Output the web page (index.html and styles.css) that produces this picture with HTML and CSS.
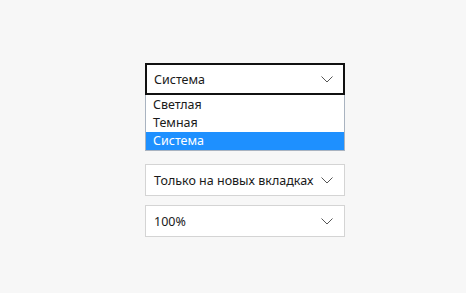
FILE: index.html
```html
<!DOCTYPE html>
<html lang="ru">
<head>
  <meta charset="UTF-8" />
  <title>Настройки</title>
  <link rel="stylesheet" href="styles.css">
</head>
<body>
  <div class="settings">
    <div class="select open">
      <span class="value">Система</span>
      <svg class="chevron" width="12" height="7" viewBox="0 0 12 7"><path d="M0.5 0.5 L6 6 L11.5 0.5" fill="none" stroke="#555" stroke-width="1"/></svg>
    </div>
    <ul class="options">
      <li>Светлая</li>
      <li>Темная</li>
      <li class="active">Система</li>
    </ul>

    <div class="select second">
      <span class="value">Только на новых вкладках</span>
      <svg class="chevron" width="12" height="7" viewBox="0 0 12 7"><path d="M0.5 0.5 L6 6 L11.5 0.5" fill="none" stroke="#555" stroke-width="1"/></svg>
    </div>

    <div class="select third">
      <span class="value">100%</span>
      <svg class="chevron" width="12" height="7" viewBox="0 0 12 7"><path d="M0.5 0.5 L6 6 L11.5 0.5" fill="none" stroke="#555" stroke-width="1"/></svg>
    </div>
  </div>
</body>
</html>
```

FILE: styles.css
```css
body {
  font-family: "Noto Sans", "Open Sans", sans-serif;
  font-size: 12.5px;
  color: #1a1a1a;
  background: #f7f7f7;
  margin: 0;
  padding: 0;
}
.settings {
  width: 200px;
  padding: 63px 0 0 145px;
}
.select {
  box-sizing: border-box;
  height: 32px;
  background: #fff;
  border: 1px solid #d4d4d4;
  display: flex;
  align-items: center;
  justify-content: space-between;
  padding: 0 11px 0 8px;
}
.select.open {
  border: 2px solid #111;
  padding: 0 10px 0 7px;
}
.select.second {
  margin-top: 13px;
}
.select.third {
  margin-top: 9px;
}
.chevron {
  display: block;
}
.options {
  list-style: none;
  margin: 0;
  padding: 1px 0 0;
  box-sizing: border-box;
  border: 1px solid #a9b3c0;
  border-top: none;
  background: #fff;
}
.options li {
  height: 18px;
  line-height: 18px;
  padding-left: 7px;
}
.options li.active {
  background: #1e90ff;
  color: #fff;
}
```
